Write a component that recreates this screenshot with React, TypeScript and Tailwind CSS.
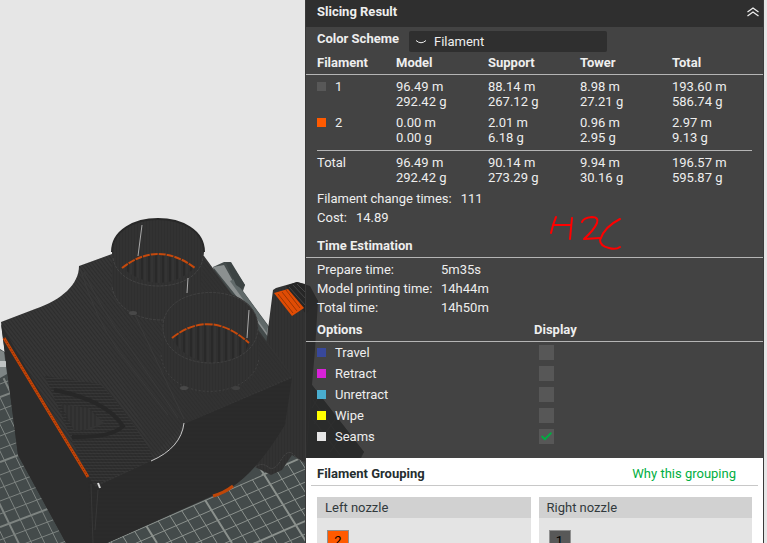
import { Check } from "lucide-react";

const usage = [
  {
    name: "1",
    color: "bg-[#585858]",
    cells: [
      ["96.49 m", "292.42 g"],
      ["88.14 m", "267.12 g"],
      ["8.98 m", "27.21 g"],
      ["193.60 m", "586.74 g"],
    ],
  },
  {
    name: "2",
    color: "bg-[#ff5a00]",
    cells: [
      ["0.00 m", "0.00 g"],
      ["2.01 m", "6.18 g"],
      ["0.96 m", "2.95 g"],
      ["2.97 m", "9.13 g"],
    ],
  },
];

const totals = [
  ["96.49 m", "292.42 g"],
  ["90.14 m", "273.29 g"],
  ["9.94 m", "30.16 g"],
  ["196.57 m", "595.87 g"],
];

const times = [
  ["Prepare time:", "5m35s"],
  ["Model printing time:", "14h44m"],
  ["Total time:", "14h50m"],
];

const options = [
  { id: "travel", label: "Travel", color: "bg-[#38489b]", checked: false },
  { id: "retract", label: "Retract", color: "bg-[#d822d8]", checked: false },
  { id: "unretract", label: "Unretract", color: "bg-[#49adcf]", checked: false },
  { id: "wipe", label: "Wipe", color: "bg-[#ffff00]", checked: false },
  { id: "seams", label: "Seams", color: "bg-[#e6e6e6]", checked: true },
];

const nozzles = [
  { title: "Left nozzle", filament: "2", color: "bg-[#ff5a00]" },
  { title: "Right nozzle", filament: "1", color: "bg-[#585858]" },
];

const steps = Array.from({ length: 30 }, (_, i) => i);

const Scene = () => {
  return (
    <svg
      className="absolute inset-0 h-full w-full"
      viewBox="0 0 767 543"
      preserveAspectRatio="xMinYMin slice"
      aria-hidden="true"
    >
      <defs>
        <pattern id="layers" width="4" height="3" patternUnits="userSpaceOnUse" patternTransform="rotate(52)">
          <rect width="4" height="3" fill="#2d2d2d" />
          <path d="M0 1H4" stroke="#3f3f3f" strokeWidth="1" />
        </pattern>
        <pattern id="walls" width="3" height="3" patternUnits="userSpaceOnUse">
          <rect width="3" height="3" fill="#2f2f2f" />
          <path d="M1 0V3" stroke="#353535" strokeWidth="1" />
        </pattern>
        <pattern id="ribs" width="7" height="10" patternUnits="userSpaceOnUse">
          <rect width="7" height="10" fill="#303030" />
          <path d="M2 0V10" stroke="#292929" strokeWidth="2" />
          <path d="M5 0V10" stroke="#383838" strokeWidth="1" />
        </pattern>
        <pattern id="infill" width="2" height="3" patternUnits="userSpaceOnUse">
          <rect width="2" height="3" fill="#2a2a2a" />
          <path d="M0 0H2" stroke="#444" />
        </pattern>
        <pattern id="front" width="4" height="4" patternUnits="userSpaceOnUse">
          <rect width="4" height="4" fill="#2a2a2a" />
          <path d="M0 1H4" stroke="#2c2c2c" />
        </pattern>
        <linearGradient id="fade" x1="0" y1="0" x2="1" y2="0">
          <stop offset="0" stopColor="#303030" stopOpacity="0" />
          <stop offset="0.6" stopColor="#303030" stopOpacity="0.7" />
        </linearGradient>
        <clipPath id="bedLeft">
          <path d="M0 380L12 374L66 543H0Z" />
        </clipPath>
        <clipPath id="bedRight">
          <path d="M107 543L262 475L252 466L306 440V543Z" />
        </clipPath>
      </defs>
      <rect width="767" height="543" fill="#e6e6e6" />

      {/* build plate */}
      <path d="M0 349L8 354L66 543H0Z" fill="#444b4b" />
      <path d="M0 350L4 352L7 374L0 378Z" fill="#7e8585" />
      <path d="M0 361H6V367H0Z" fill="#bfc3c3" />
      <path d="M213 267L224 262L230 262L245 285L243 291L312 385L364 452L320 543H100L250 440Z" fill="#444b4b" />
      <path d="M312 385L364 452L350 470L306 460Z" fill="#2c3030" />
      <path d="M313 400L345 445M312 418L340 455M318 398L312 408M326 409L314 424M335 420L320 440M344 432L330 452" stroke="#454a4a" />
      <path d="M213 267L224 265L234 283L268 328V337L258 323Z" fill="#8b9090" />
      <path d="M230 281L234 279L268 326L267 333Z" fill="#606969" />
      <path d="M226 263L231 262L245 285L242 289L236 285Z" fill="#3c4343" />
      <g clipPath="url(#bedLeft)" stroke="#7d8380">
        {steps.map((i) => (
          <path
            key={i}
            d={`M0 ${384 + i * 13}l90 -34M${-158 + i * 13} 340l102 210`}
            strokeWidth={i % 5 === 1 ? 2 : 1}
          />
        ))}
      </g>
      <g clipPath="url(#bedRight)" stroke="#8b918d">
        {steps.map((i) => (
          <path
            key={i}
            d={`M100 ${520 + i * 13}l210 -92M${-25 + i * 15} 420l77 123`}
            strokeWidth={i % 5 === 2 ? 2 : 1}
          />
        ))}
      </g>

      {/* prime tower */}
      <path
        d="M273 290L276 288L290 284L297 282L305 284L318 301L315 350L312 385L305 463L292 455L282 470L271 475L255 467L268 440L272 400L266 345Z"
        fill="url(#walls)"
      />
      <path d="M286 286L297 282L310 286L318 301L306 314Z" fill="#262626" />
      <path d="M289 287L305 305M293 285L306 299M297 284L306 293" stroke="#454545" />
      <path d="M255 467Q262 462 268 467T281 460T294 455T305 462" fill="none" stroke="#474747" strokeDasharray="2 1" />
      <path d="M274 293L288 289L304 308L292 316L288 311Z" fill="#e04c04" />
      <path d="M278 294L293 313M282 292L297 311M286 290L300 308" stroke="#9a3605" />

      {/* model */}
      <path
        d="M1 322L35 309C62 300 79 284 79 266L112 254L204 256L292 376L285 425Q258 470 232 487L107 543H66L18 455Z"
        fill="url(#layers)"
      />
      <path d="M79 268L204 260L292 376L184 424L153 455Z" fill="url(#fade)" />
      <path d="M45 376L100 384Q122 405 150 450L153 460L95 485L88 478Z" fill="url(#infill)" opacity="0.7" />
      <path d="M54 390Q106 400 123 426Q112 438 72 437" fill="none" stroke="#272727" strokeWidth="4" />
      <path d="M61 404L88 408L104 423L92 429L74 431Z" fill="#343434" />
      <path d="M63 404V415M67 405V421M71 406V426M75 406V430M79 407V430M83 407V430M87 408V429M91 410V427M95 413V426" stroke="#2a2a2a" />
      <path d="M80 268Q96 320 118 350L168 415M84 272Q104 315 128 345L178 418M117 277L184 419" fill="none" stroke="#3a3a3a" strokeWidth="1" />
      <path d="M1 324L88 477L95 487L92 543H66L18 455Z" fill="#2b2b2b" />
      <path d="M88 477L95 487L153 460Q181 446 184 424L292 378L285 425Q258 470 232 487L107 543H90Z" fill="url(#front)" />
      <path d="M91 484L93 543M98 490L95 530" stroke="#383838" />
      <path d="M4 338L88 477" stroke="#c34306" strokeWidth="3" />
      <path d="M4 338L88 477" stroke="#6b2a08" strokeWidth="1" strokeDasharray="1 2" />
      <path d="M98 483L100 488" stroke="#d9d9d9" strokeWidth="2" />
      <path d="M151 461Q181 448 184 423" fill="none" stroke="#c9c9c9" strokeWidth="1" />
      <path d="M213 496Q224 493 233 486" fill="none" stroke="#bf4608" strokeWidth="3" />

      {/* rear cylinder */}
      <path d="M112 252C112 208 204 208 204 252L200 290C198 330 117 332 112 286Z" fill="url(#walls)" />
      <path d="M122 268Q158 240 195 268Q160 298 122 268Z" fill="url(#ribs)" />
      <path d="M112 252C112 208 204 208 204 252" fill="none" stroke="#282828" strokeWidth="2" />
      <path d="M113 258C118 295 199 296 203 257M112 287C120 330 196 328 201 298" fill="none" stroke="#424242" strokeDasharray="3 1" />
      <path d="M122 268Q158 240 195 268" fill="none" stroke="#c5490c" strokeWidth="2" strokeDasharray="7 1" />
      <path d="M142 225L138 256M188 278L187 293" stroke="#aaa" strokeWidth="1" />
      <ellipse cx="133" cy="313" rx="4" ry="2" fill="#484848" />

      {/* front cylinder */}
      <path d="M163 327C163 279 258 279 258 327L259 362C253 405 165 403 161 362Z" fill="url(#walls)" />
      <path d="M172 338Q210 310 249 342Q246 363 210 363Q182 358 172 338Z" fill="url(#ribs)" />
      <path d="M163 327C163 281 258 281 258 327C258 375 163 375 163 327Z" fill="none" stroke="#404040" strokeDasharray="3 1" />
      <path d="M161 355C166 405 254 401 259 358" fill="none" stroke="#404040" strokeDasharray="2 2" />
      <path d="M172 338Q210 308 249 343" fill="none" stroke="#c5490c" strokeWidth="2" strokeDasharray="8 1" />
      <path d="M249 310L247 338" stroke="#aaa" strokeWidth="1" />
      <ellipse cx="184" cy="388" rx="4" ry="2" fill="#484848" />
      <ellipse cx="236" cy="388" rx="4" ry="2" fill="#404040" />
    </svg>
  );
};

const Heading = ({ children }: { children: string }) => {
  return (
    <h3 className="border-b border-[#b5b5b5] px-[11px] leading-[23px] font-bold">
      {children}
    </h3>
  );
};

const Amount = ({ value }: { value: string[] }) => {
  return (
    <td className="pt-1 pb-0.5 align-top">
      <div>{value[0]}</div>
      <div>{value[1]}</div>
    </td>
  );
};

const FilamentTable = () => {
  return (
    <table className="w-full table-fixed border-collapse text-left leading-[15px]">
      <colgroup>
        <col className="w-[90px]" />
        <col className="w-[92px]" />
        <col className="w-[92px]" />
        <col className="w-[92px]" />
        <col />
      </colgroup>
      <thead>
        <tr className="border-b border-[#b5b5b5] leading-[22px]">
          <th className="pl-[11px] font-bold">Filament</th>
          <th className="font-bold">Model</th>
          <th className="font-bold">Support</th>
          <th className="font-bold">Tower</th>
          <th className="font-bold">Total</th>
        </tr>
      </thead>
      <tbody>
        {usage.map((row) => (
          <tr key={row.name}>
            <td className="pt-1 pl-[11px] align-top">
              <div className="flex items-center gap-[9px]">
                <span className={`size-[9px] ${row.color}`} />
                {row.name}
              </div>
            </td>
            {row.cells.map((value) => (
              <Amount key={value[0]} value={value} />
            ))}
          </tr>
        ))}
      </tbody>
      <tfoot>
        <tr>
          <td colSpan={5} className="px-[11px] pt-[3px]">
            <div className="h-px bg-[#b5b5b5]" />
          </td>
        </tr>
        <tr>
          <td className="pt-1 pl-[11px] align-top">Total</td>
          {totals.map((value) => (
            <Amount key={value[0]} value={value} />
          ))}
        </tr>
      </tfoot>
    </table>
  );
};

const SlicingResult = () => {
  return (
    <section className="text-[#eeeeee]">
      <div className="flex h-[27px] items-center justify-between bg-[#2f2f2f] pr-1 pb-1 pl-[11px]">
        <h2 className="font-bold">Slicing Result</h2>
        <button type="button" aria-label="Collapse">
          <svg className="h-2.5 w-3" viewBox="0 0 12 10" fill="none" stroke="#eeeeee" strokeWidth="1.3">
            <path d="M0.5 5L6 1L11.5 5M0.5 9L6 5L11.5 9" />
          </svg>
        </button>
      </div>
      <div className="relative bg-[#2b2b2b]/87 pb-[11px]">
        <div className="flex items-start gap-2 pt-1 pl-[11px]">
          <label htmlFor="scheme" className="w-[84px] leading-4 font-bold whitespace-nowrap">
            Color Scheme
          </label>
          <div className="relative w-[198px]">
            <select
              id="scheme"
              className="block h-[21px] w-full appearance-none rounded-xs bg-[#2f2f2f] pl-[25px]"
            >
              <option>Filament</option>
            </select>
            <svg
              className="pointer-events-none absolute top-2 left-1.5 h-1.5 w-3"
              viewBox="0 0 12 6"
              fill="none"
              stroke="#eeeeee"
            >
              <path d="M1 1.5Q6 6 11 1.5" />
            </svg>
          </div>
        </div>
        <FilamentTable />
        <div className="mt-0.5 px-[11px] leading-[19px]">
          <p className="flex gap-[9px]">
            <span>Filament change times:</span>
            <span>111</span>
          </p>
          <p className="flex gap-[9px]">
            <span>Cost:</span>
            <span>14.89</span>
          </p>
        </div>
        <svg
          className="absolute top-[187px] left-[243px] h-[38px] w-[76px]"
          viewBox="549 214 76 38"
          fill="none"
          stroke="#ff0000"
          strokeWidth="2"
          strokeLinecap="round"
          strokeLinejoin="round"
          aria-label="H2C"
        >
          <path d="M556 217Q553 224 551 233M553 225H571M572 218Q571 228 570 239" />
          <path d="M582 222Q583 218 592 217Q599 217 597 223Q594 230 584 239L600 238" />
          <path d="M620 219Q604 227 600 240Q600 246 609 248Q616 250 620 247" />
        </svg>
        <div className="mt-[7px]">
          <Heading>Time Estimation</Heading>
        </div>
        <dl className="grid grid-cols-[124px_1fr] px-[11px] pt-0.5 leading-[19px]">
          {times.map(([label, value]) => (
            <div key={label} className="contents">
              <dt className="whitespace-nowrap">{label}</dt>
              <dd>{value}</dd>
            </div>
          ))}
        </dl>
        <table className="mt-0.5 w-full table-fixed border-collapse text-left">
          <thead>
            <tr className="border-b border-[#b5b5b5] leading-[22px]">
              <th className="w-[228px] pl-[11px] font-bold">Options</th>
              <th className="font-bold">Display</th>
            </tr>
          </thead>
          <tbody>
            {options.map((option) => (
              <tr key={option.id} className="h-[21px] leading-[21px]">
                <td className="pl-[11px]">
                  <label htmlFor={option.id} className="flex items-center gap-[9px]">
                    <span className={`size-[9px] ${option.color}`} />
                    {option.label}
                  </label>
                </td>
                <td className="pl-[5px]">
                  <div className="grid size-[15px]">
                    <input
                      id={option.id}
                      type="checkbox"
                      defaultChecked={option.checked}
                      className="peer col-start-1 row-start-1 size-[15px] appearance-none bg-[#575757]"
                    />
                    <Check
                      className="pointer-events-none invisible col-start-1 row-start-1 size-[13px] place-self-center text-[#00ae42] peer-checked:visible"
                      strokeWidth={3.5}
                    />
                  </div>
                </td>
              </tr>
            ))}
          </tbody>
        </table>
      </div>
    </section>
  );
};

const FilamentGrouping = () => {
  return (
    <section className="flex-1 bg-white text-[#323a3d]">
      <div className="mx-[5px] flex h-7 items-center justify-between border-b border-[#c8c8c8] pt-1 pr-[22px] pl-1.5">
        <h2 className="font-bold text-[#262e30]">Filament Grouping</h2>
        <a href="#grouping" className="text-[#00ae42]">
          Why this grouping
        </a>
      </div>
      <div className="grid grid-cols-2 gap-2 px-[11px] pt-[11px]">
        {nozzles.map((nozzle) => (
          <div key={nozzle.title} className="h-40 bg-[#e4e4e4]">
            <h3 className="bg-[#d1d1d1] px-2 leading-[21px]">{nozzle.title}</h3>
            <div className="px-2.5 pt-3">
              <div
                className={`size-[22px] border border-[#909090] text-center leading-5 text-black ${nozzle.color}`}
              >
                {nozzle.filament}
              </div>
            </div>
          </div>
        ))}
      </div>
    </section>
  );
};

const App = () => {
  return (
    <main className="relative h-screen overflow-hidden bg-[#e6e6e6] font-[Roboto,sans-serif] text-[13px]">
      <Scene />
      <div className="relative mr-[3px] ml-[305px] flex min-h-full flex-col border-x border-[#3a3a3a]">
        <SlicingResult />
        <FilamentGrouping />
      </div>
    </main>
  );
};

export default App;
